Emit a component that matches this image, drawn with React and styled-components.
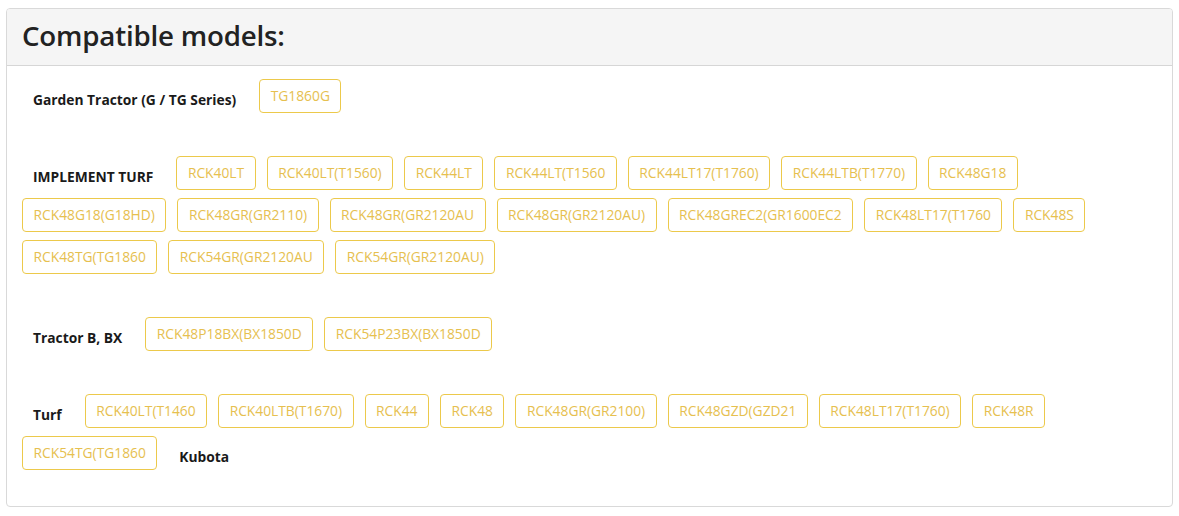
import React from "react";
import styled, { createGlobalStyle } from "styled-components";

const GlobalStyle = createGlobalStyle`
  body {
    margin: 0;
    background: #fff;
    font-family: "Open Sans", "Liberation Sans", sans-serif;
  }
`;

const Page = styled.div`
  padding: 8px 6px 8px 6px;
`;

const Card = styled.section`
  border: 1px solid #d9d9d9;
  border-radius: 4px;
  background: #fff;
  overflow: hidden;
`;

const CardHeader = styled.header`
  display: flex;
  align-items: center;
  height: 57px;
  padding: 0 15px 5px;
  box-sizing: border-box;
  background: #f5f5f5;
  border-bottom: 1px solid #d6d6d6;
`;

const Title = styled.h2`
  margin: 0;
  font-size: 27.7px;
  font-weight: 600;
  color: #222;
  letter-spacing: -0.2px;
`;

const CardBody = styled.div`
  display: flex;
  flex-direction: column;
  gap: 43px;
  padding: 13px 15px 36px;
`;

const Group = styled.div`
  display: flex;
  flex-wrap: wrap;
  align-items: center;
  row-gap: 8px;
`;

const Label = styled.strong`
  padding-top: 6px;
  margin: 0 23px 0 11px;
  font-size: 13.8px;
  font-weight: 700;
  color: #1a1a1a;
  white-space: nowrap;
`;

const Model = styled.a`
  display: inline-block;
  box-sizing: border-box;
  height: 34px;
  margin-right: 11px;
  padding: 0 10.5px;
  border: 1px solid #ecc94b;
  border-radius: 4px;
  font-size: 13.8px;
  line-height: 32px;
  color: #e6c04f;
  text-decoration: none;
  white-space: nowrap;
`;

const groups = [
  { label: "Garden Tractor (G / TG Series)", models: ["TG1860G"] },
  {
    label: "IMPLEMENT TURF",
    models: [
      "RCK40LT", "RCK40LT(T1560)", "RCK44LT", "RCK44LT(T1560", "RCK44LT17(T1760)",
      "RCK44LTB(T1770)", "RCK48G18", "RCK48G18(G18HD)", "RCK48GR(GR2110)",
      "RCK48GR(GR2120AU", "RCK48GR(GR2120AU)", "RCK48GREC2(GR1600EC2",
      "RCK48LT17(T1760", "RCK48S", "RCK48TG(TG1860", "RCK54GR(GR2120AU",
      "RCK54GR(GR2120AU)",
    ],
  },
  { label: "Tractor B, BX", models: ["RCK48P18BX(BX1850D", "RCK54P23BX(BX1850D"] },
  {
    label: "Turf",
    models: [
      "RCK40LT(T1460", "RCK40LTB(T1670)", "RCK44", "RCK48", "RCK48GR(GR2100)",
      "RCK48GZD(GZD21", "RCK48LT17(T1760)", "RCK48R", "RCK54TG(TG1860",
    ],
    trailing: "Kubota",
  },
];

export default function App() {
  return (
    <Page>
      <GlobalStyle />
      <Card>
        <CardHeader>
          <Title>Compatible models:</Title>
        </CardHeader>
        <CardBody>
          {groups.map((g) => (
            <Group key={g.label}>
              <Label>{g.label}</Label>
              {g.models.map((m) => (
                <Model key={m} href="#">
                  {m}
                </Model>
              ))}
              {g.trailing && <Label>{g.trailing}</Label>}
            </Group>
          ))}
        </CardBody>
      </Card>
    </Page>
  );
}
